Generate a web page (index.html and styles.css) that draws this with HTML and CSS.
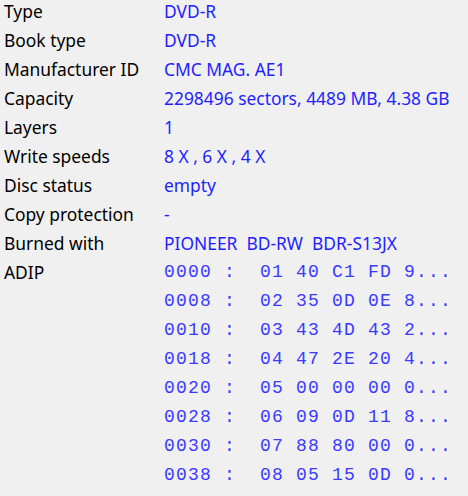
FILE: index.html
```html
<!DOCTYPE html>
<html>
<head>
<meta charset="utf-8">
<link rel="stylesheet" href="styles.css">
</head>
<body>
<div class="props">
  <div class="row"><span class="label">Type</span><span class="value">DVD-R</span></div>
  <div class="row"><span class="label">Book type</span><span class="value">DVD-R</span></div>
  <div class="row"><span class="label">Manufacturer ID</span><span class="value">CMC MAG. AE1</span></div>
  <div class="row"><span class="label">Capacity</span><span class="value">2298496 sectors, 4489 MB, 4.38 GB</span></div>
  <div class="row"><span class="label">Layers</span><span class="value">1</span></div>
  <div class="row"><span class="label">Write speeds</span><span class="value">8 X , 6 X , 4 X</span></div>
  <div class="row"><span class="label">Disc status</span><span class="value">empty</span></div>
  <div class="row"><span class="label">Copy protection</span><span class="value">-</span></div>
  <div class="row"><span class="label">Burned with</span><span class="value">PIONEER&nbsp; BD-RW&nbsp; BDR-S13JX</span></div>
  <div class="row"><span class="label">ADIP</span><span class="value mono">0000 :  01 40 C1 FD 9...</span></div>
  <div class="row"><span class="label"></span><span class="value mono">0008 :  02 35 0D 0E 8...</span></div>
  <div class="row"><span class="label"></span><span class="value mono">0010 :  03 43 4D 43 2...</span></div>
  <div class="row"><span class="label"></span><span class="value mono">0018 :  04 47 2E 20 4...</span></div>
  <div class="row"><span class="label"></span><span class="value mono">0020 :  05 00 00 00 0...</span></div>
  <div class="row"><span class="label"></span><span class="value mono">0028 :  06 09 0D 11 8...</span></div>
  <div class="row"><span class="label"></span><span class="value mono">0030 :  07 88 80 00 0...</span></div>
  <div class="row"><span class="label"></span><span class="value mono">0038 :  08 05 15 0D 0...</span></div>
</div>
</body>
</html>
```
FILE: styles.css
```css
html, body {
  margin: 0;
  padding: 0;
  background: #f0f0f0;
}
.props {
  padding: 0 0 0 4px;
  font-family: "Noto Sans", "Open Sans", sans-serif;
  font-size: 17.4px;
  color: #000;
}
.row {
  display: grid;
  grid-template-columns: 160px 1fr;
  height: 29px;
  line-height: 23px;
  white-space: nowrap;
}
.value {
  color: #1f1fff;
}
.mono {
  font-family: "Liberation Mono", monospace;
  font-size: 18px;
  letter-spacing: 1.2px;
  line-height: 22px;
  white-space: pre;
  color: #3a3aff;
}
```
